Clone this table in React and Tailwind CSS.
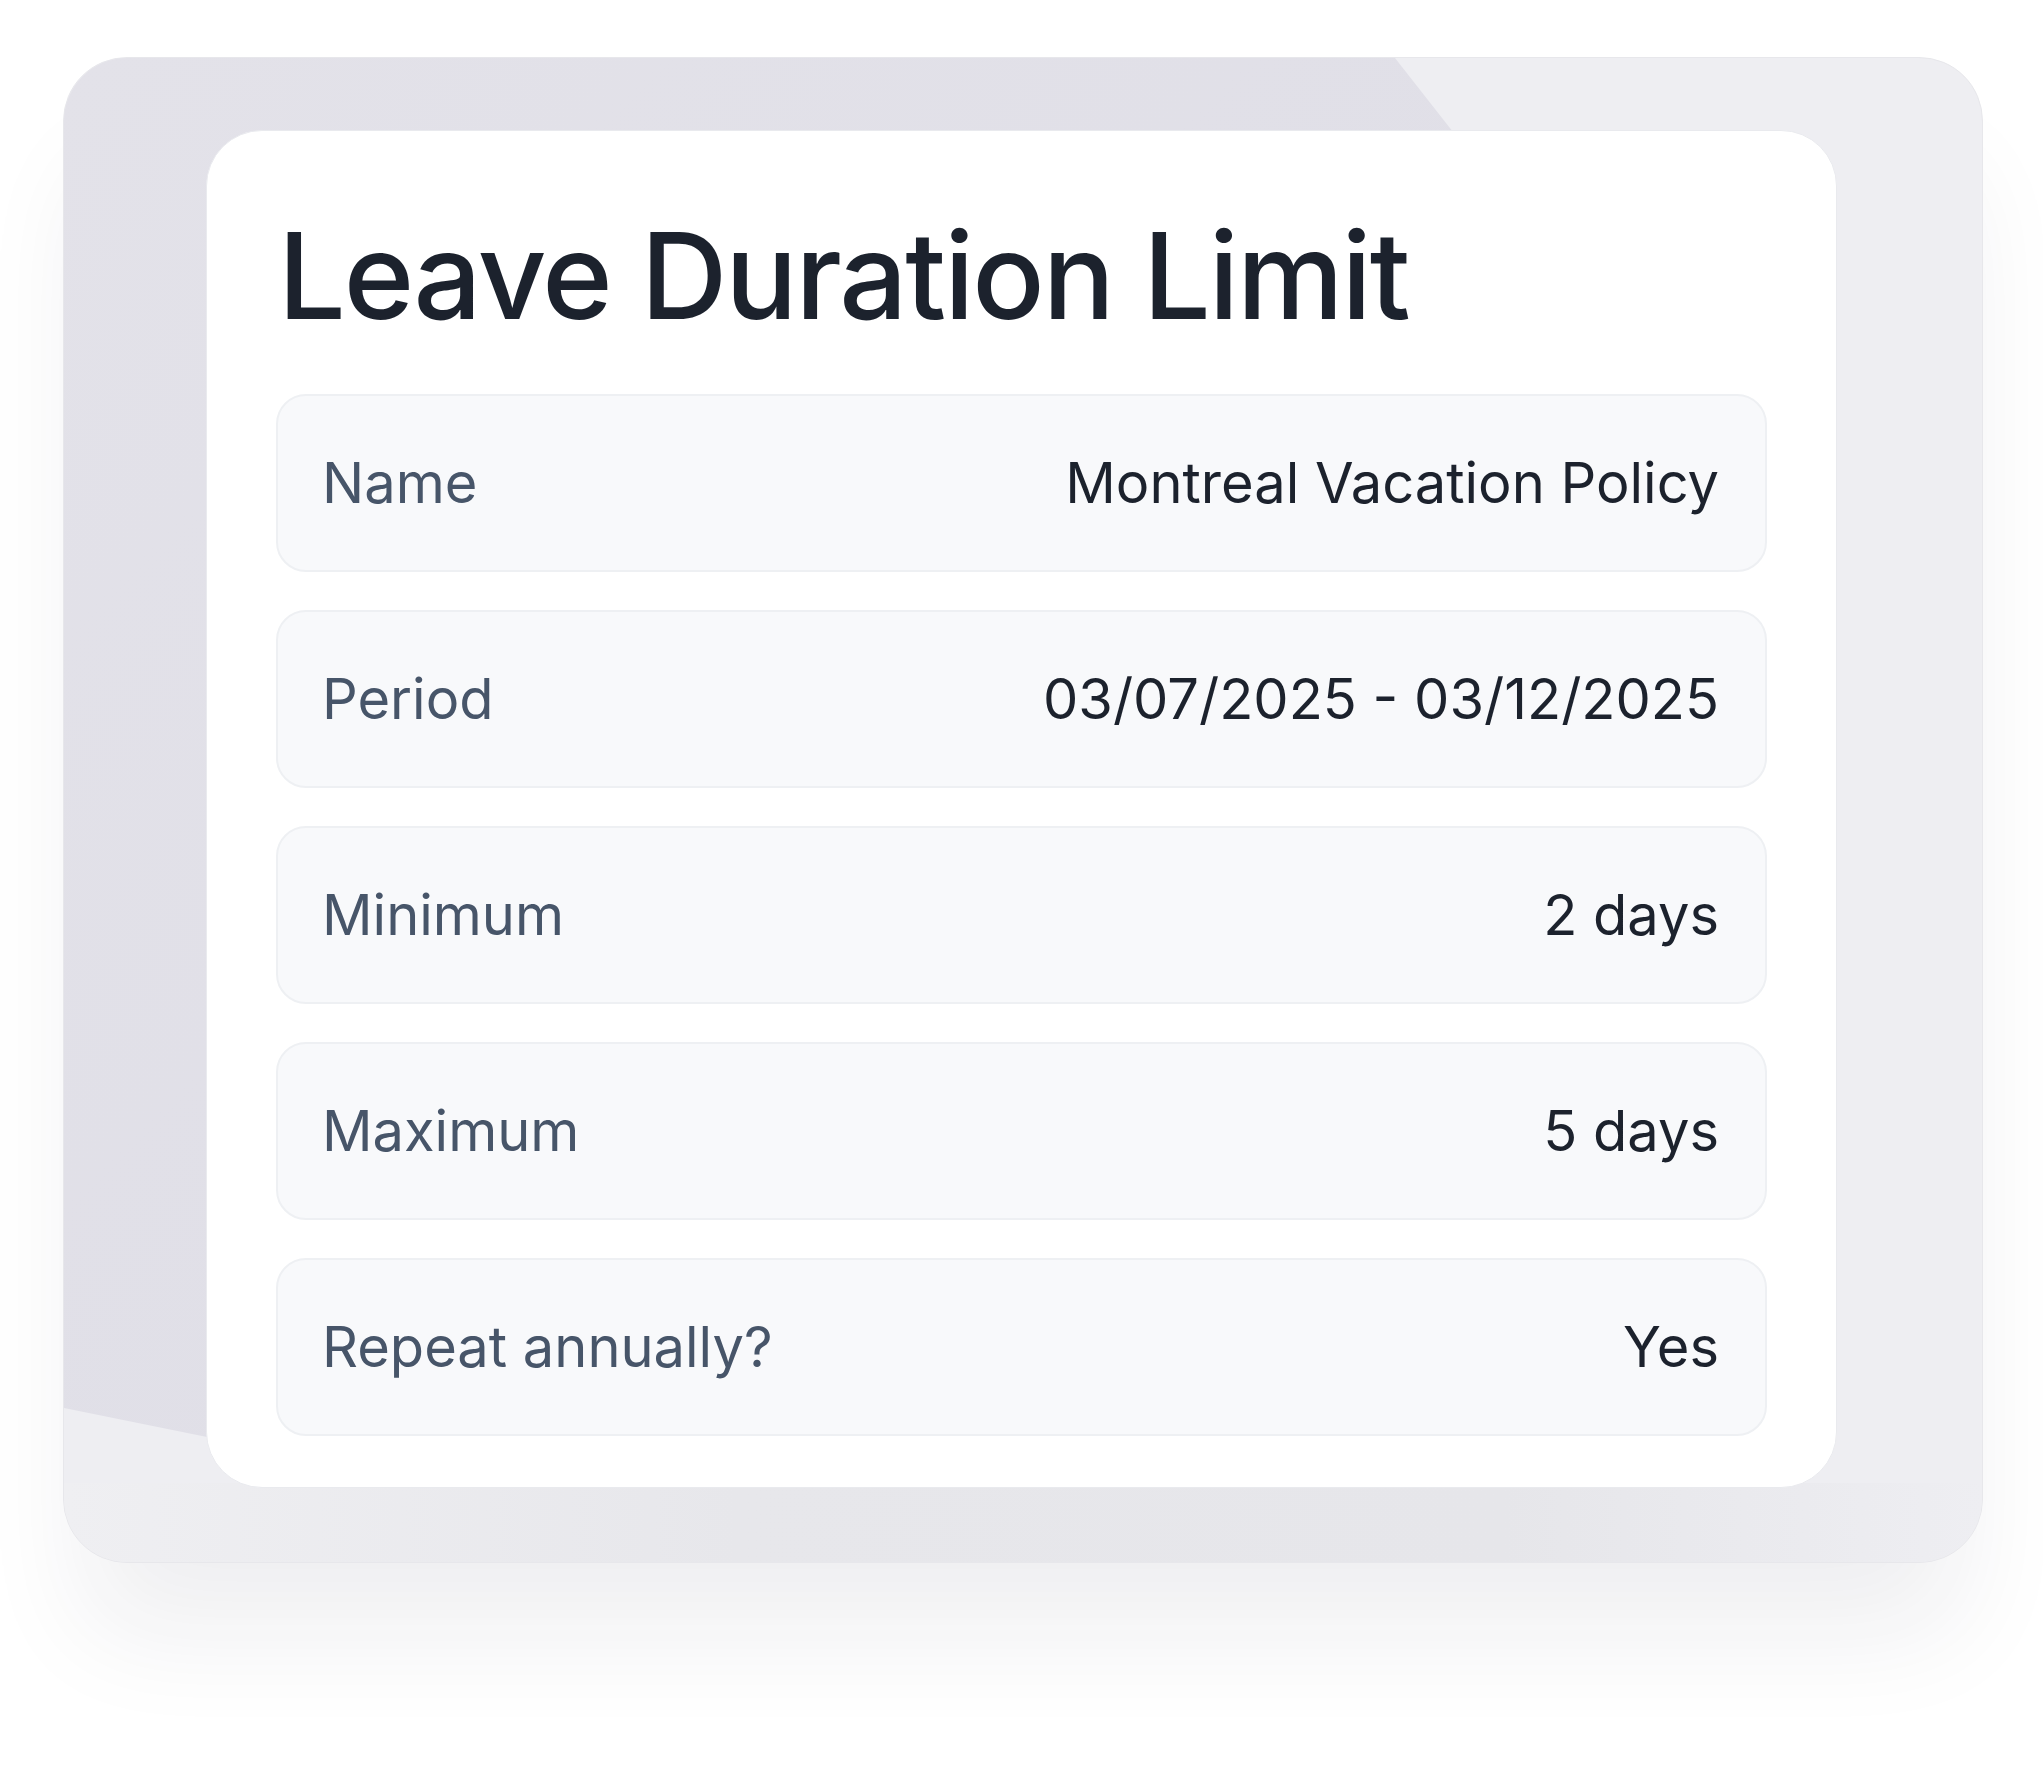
const rows = [
  { label: 'Name', value: 'Montreal Vacation Policy' },
  { label: 'Period', value: '03/07/2025 - 03/12/2025' },
  { label: 'Minimum', value: '2 days' },
  { label: 'Maximum', value: '5 days' },
  { label: 'Repeat annually?', value: 'Yes' },
];

export default function App() {
  return (
    <div className="w-[2043px] h-[1770px] bg-white pl-[63px] pt-[57px]" style={{ fontFamily: 'Inter, "Noto Sans", sans-serif' }}>
      {/* backdrop panel */}
      <div className="relative w-[1920px] h-[1506px] rounded-[64px] overflow-hidden border border-[#e7e7eb] bg-[#eeeef2] shadow-[0_90px_110px_-20px_rgba(30,30,50,0.07)]">
        <svg className="absolute inset-0" width="1920" height="1506" viewBox="0 0 1920 1506">
          <defs>
            <linearGradient id="bd" x1="0" y1="0" x2="1" y2="1">
              <stop offset="0" stopColor="#e3e2e9" />
              <stop offset="1" stopColor="#dedde6" />
            </linearGradient>
            <linearGradient id="bb" x1="0" y1="0" x2="1" y2="0">
              <stop offset="0" stopColor="#efeff2" />
              <stop offset="0.35" stopColor="#e7e7eb" />
              <stop offset="0.75" stopColor="#e6e6ea" />
              <stop offset="1" stopColor="#eeeef2" />
            </linearGradient>
          </defs>
          <rect x="0" y="1425" width="1920" height="81" fill="url(#bb)" />
          <polygon points="0,0 1331,0 1480,190 1480,1425 143,1379 0,1350" fill="url(#bd)" />
        </svg>

        <div className="relative ml-[142px] mt-[72px] w-[1631px] h-[1358px] rounded-[56px] bg-white border border-[#e9eaee] px-[69px] pt-[85px] pb-[52px] flex flex-col">
          <h1 className="text-[120px] leading-none font-medium tracking-[-0.017em] text-[#1c222d] pl-[2px]">
            Leave Duration Limit
          </h1>
          <div className="mt-[58px] flex flex-col gap-[38px]">
            {rows.map(r => (
              <div key={r.label} className="h-[178px] rounded-[30px] bg-[#f8f9fb] border-2 border-[#eef0f3] pl-[44px] pr-[46px] flex items-center justify-between">
                <span className="text-[56px] text-[#475569]">{r.label}</span>
                <span className="text-[56px] text-[#1c222d]">{r.value}</span>
              </div>
            ))}
          </div>
        </div>
      </div>
    </div>
  );
}
